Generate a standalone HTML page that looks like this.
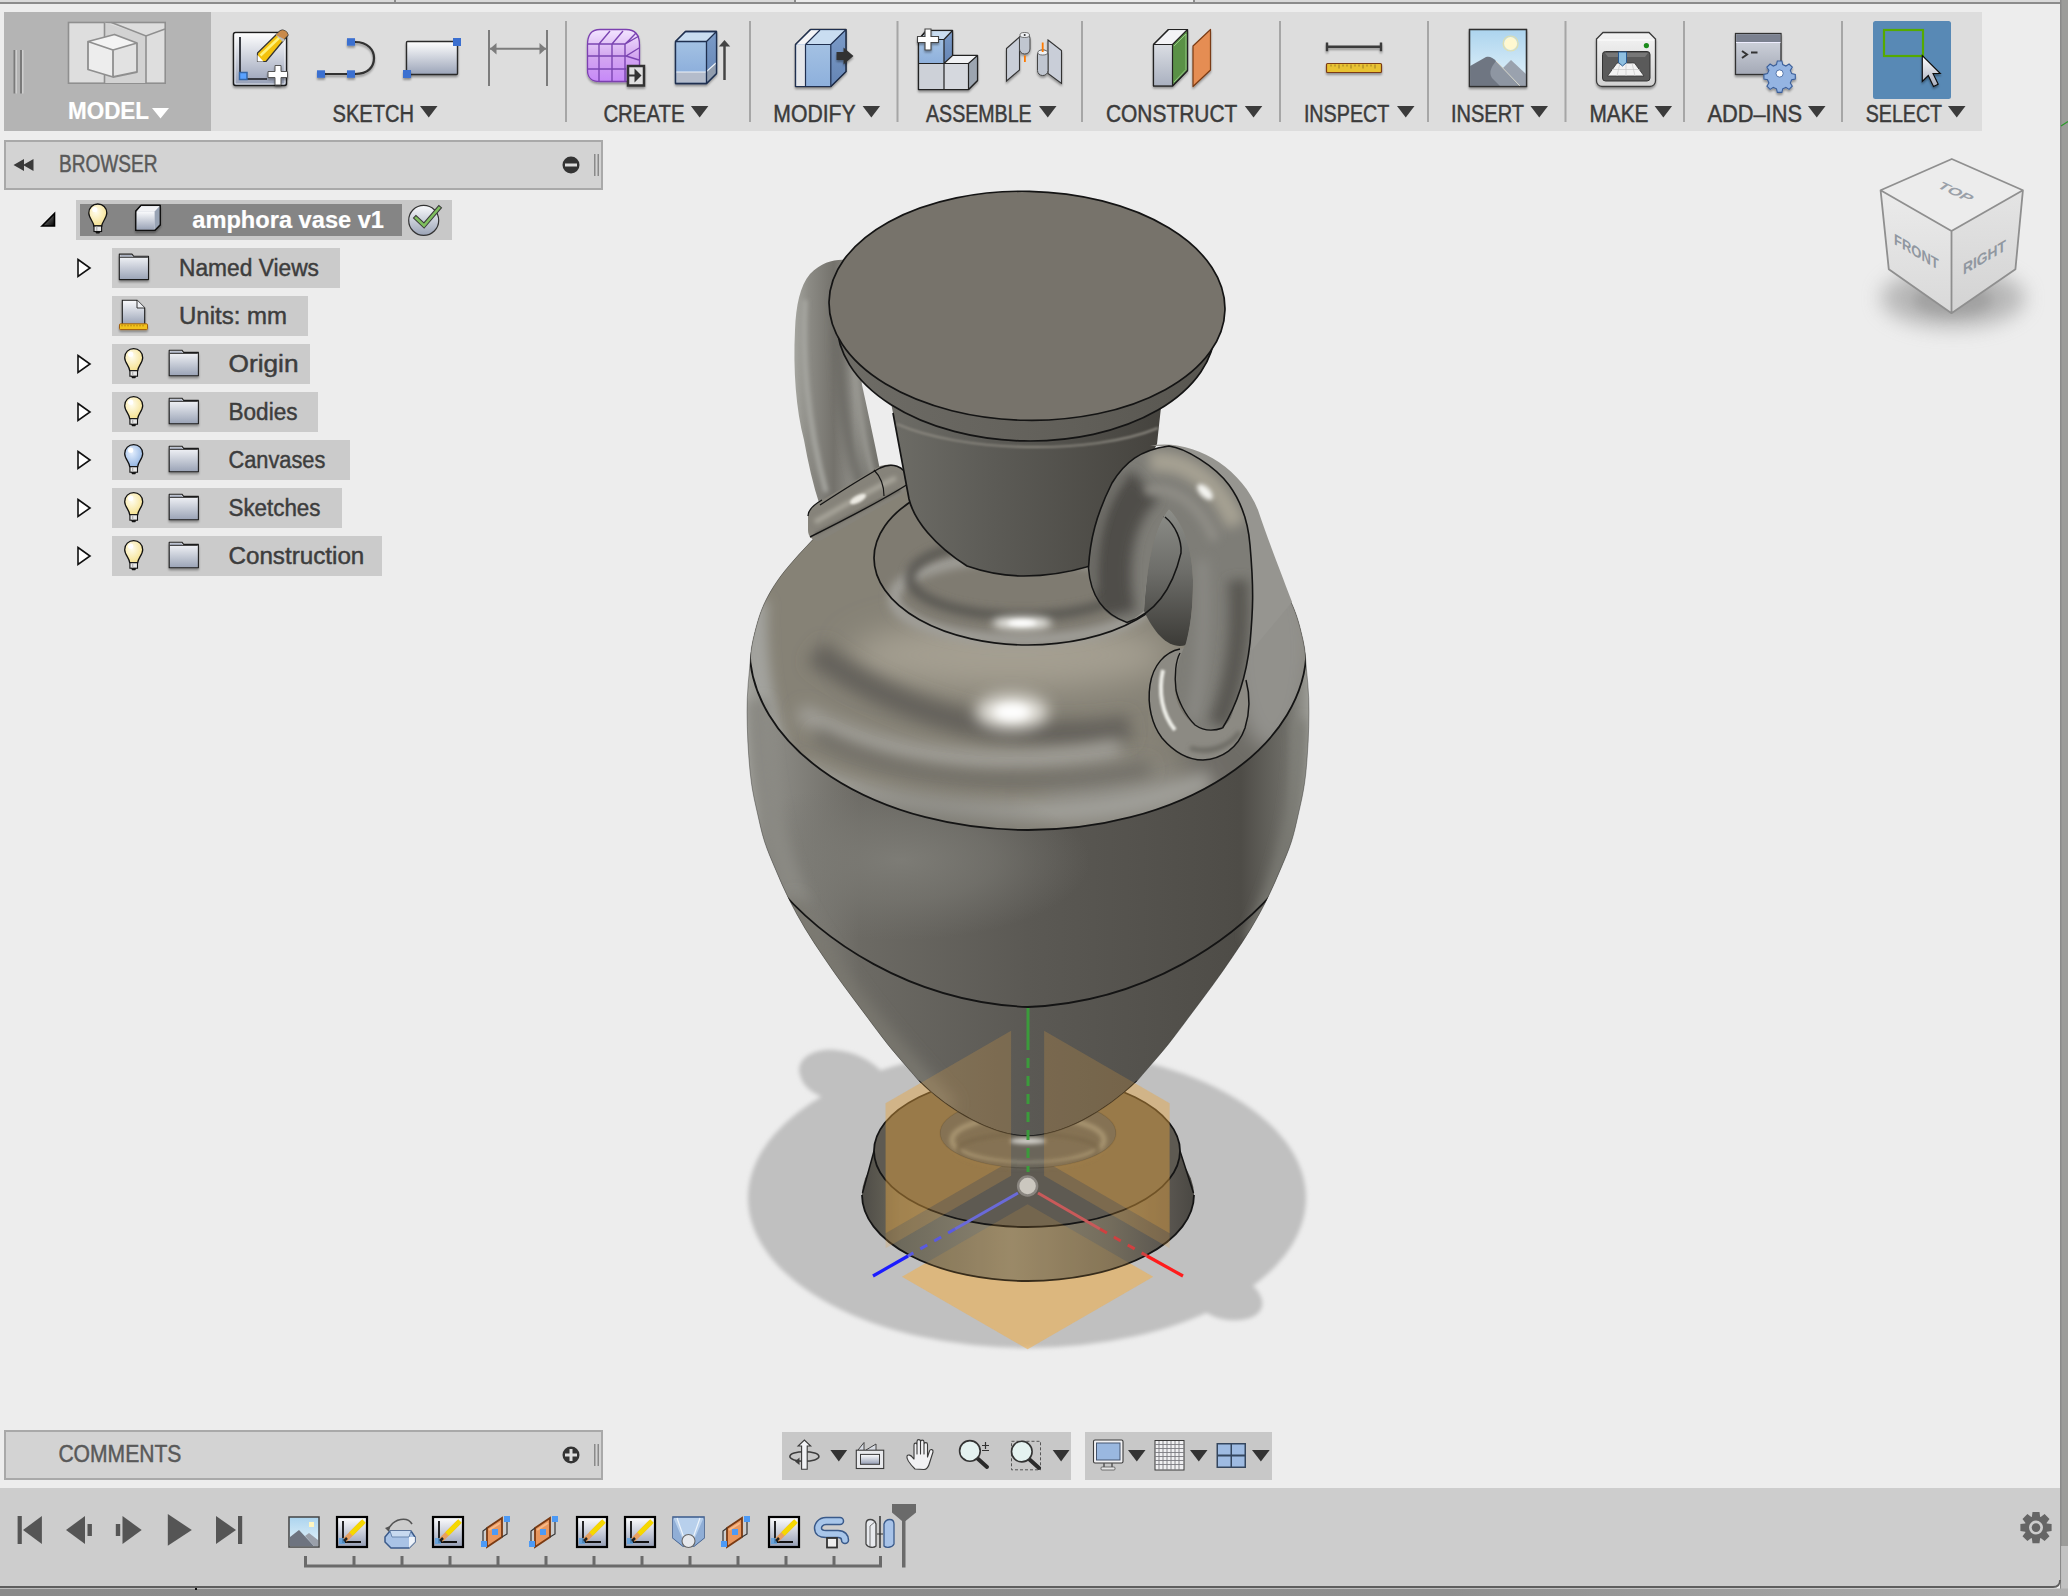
<!DOCTYPE html><html><head><meta charset="utf-8"><style>
html,body{margin:0;padding:0}
body{width:2068px;height:1596px;overflow:hidden;background:#ededed;position:relative}
svg{position:absolute;left:0;top:0;font-family:"Liberation Sans",sans-serif}
</style></head><body>
<svg width="2068" height="1596" viewBox="0 0 2068 1596">

<defs>
<linearGradient id="gSk" x1="0" y1="0" x2="0" y2="1"><stop offset="0" stop-color="#ffffff"/><stop offset="1" stop-color="#959eb5"/></linearGradient>
<linearGradient id="gRect" x1="0" y1="0" x2="0" y2="1"><stop offset="0" stop-color="#ffffff"/><stop offset="1" stop-color="#9ba4b8"/></linearGradient>
<linearGradient id="gPurp" x1="0" y1="0" x2="0" y2="1"><stop offset="0" stop-color="#f3e6ff"/><stop offset="0.5" stop-color="#d4a8f0"/><stop offset="1" stop-color="#c688f8"/></linearGradient>
<linearGradient id="gBlueF" x1="0" y1="0" x2="0" y2="1"><stop offset="0" stop-color="#a3c1e3"/><stop offset="1" stop-color="#8eb0dc"/></linearGradient>
<linearGradient id="gBlueR" x1="0" y1="0" x2="0" y2="1"><stop offset="0" stop-color="#7b9bc8"/><stop offset="1" stop-color="#6585b5"/></linearGradient>
<linearGradient id="gGrayF" x1="0" y1="0" x2="0" y2="1"><stop offset="0" stop-color="#dadde3"/><stop offset="1" stop-color="#aab1c0"/></linearGradient>
<linearGradient id="gSky" x1="0" y1="0" x2="0" y2="1"><stop offset="0" stop-color="#acd4ee"/><stop offset="1" stop-color="#e6f4fb"/></linearGradient>
<linearGradient id="gPrinter" x1="0" y1="0" x2="0" y2="1"><stop offset="0" stop-color="#f4f4f4"/><stop offset="1" stop-color="#d2d2d2"/></linearGradient>
<linearGradient id="gWin" x1="0" y1="0" x2="0" y2="1"><stop offset="0" stop-color="#d6dae2"/><stop offset="1" stop-color="#a4a9b6"/></linearGradient>
<linearGradient id="gCur" x1="0" y1="0" x2="0" y2="1"><stop offset="0" stop-color="#ffffff"/><stop offset="1" stop-color="#a8adbd"/></linearGradient>
<linearGradient id="gFold" x1="0" y1="0" x2="0" y2="1"><stop offset="0" stop-color="#fafbfd"/><stop offset="1" stop-color="#9aa3b6"/></linearGradient>
<radialGradient id="gBulb" cx="0.4" cy="0.35" r="0.7"><stop offset="0" stop-color="#fffdf0"/><stop offset="1" stop-color="#f5e08a"/></radialGradient>
<radialGradient id="gBulbB" cx="0.4" cy="0.35" r="0.7"><stop offset="0" stop-color="#e6f0ff"/><stop offset="1" stop-color="#8fb2e0"/></radialGradient>
<filter id="dsh" filterUnits="userSpaceOnUse" x="0" y="0" width="2068" height="1596"><feGaussianBlur in="SourceAlpha" stdDeviation="1.2"/><feOffset dy="1.5"/><feComponentTransfer><feFuncA type="linear" slope="0.35"/></feComponentTransfer><feMerge><feMergeNode/><feMergeNode in="SourceGraphic"/></feMerge></filter>
</defs>


<defs>
<filter id="blur1" filterUnits="userSpaceOnUse" x="0" y="0" width="2068" height="1596"><feGaussianBlur stdDeviation="1.2"/></filter>
<filter id="blur2" filterUnits="userSpaceOnUse" x="0" y="0" width="2068" height="1596"><feGaussianBlur stdDeviation="2"/></filter>
<filter id="blur4" filterUnits="userSpaceOnUse" x="0" y="0" width="2068" height="1596"><feGaussianBlur stdDeviation="4"/></filter>
<filter id="blur6" filterUnits="userSpaceOnUse" x="0" y="0" width="2068" height="1596"><feGaussianBlur stdDeviation="6"/></filter>
<filter id="blur8" filterUnits="userSpaceOnUse" x="0" y="0" width="2068" height="1596"><feGaussianBlur stdDeviation="8"/></filter>
<filter id="blur10" filterUnits="userSpaceOnUse" x="0" y="0" width="2068" height="1596"><feGaussianBlur stdDeviation="10"/></filter>
<filter id="blur16" filterUnits="userSpaceOnUse" x="0" y="0" width="2068" height="1596"><feGaussianBlur stdDeviation="16"/></filter>
<radialGradient id="gMidL"><stop offset="0" stop-color="#7e7d77" stop-opacity="0.95"/><stop offset="0.5" stop-color="#7a7973" stop-opacity="0.6"/><stop offset="1" stop-color="#767570" stop-opacity="0"/></radialGradient>
<mask id="mOutBody" maskUnits="userSpaceOnUse" x="0" y="0" width="2068" height="1596"><rect x="0" y="0" width="2068" height="1596" fill="#fff"/><path d="M918.9,1081 C917.7,1079.6 917.0,1078.7 911.7,1072.5 C906.4,1066.3 894.9,1053.3 887.2,1043.7 C879.5,1034.1 872.7,1024.5 865.5,1014.9 C858.3,1005.3 850.9,995.6 843.9,986 C836.9,976.4 830.2,966.8 823.7,957.2 C817.2,947.6 810.8,938.0 805,928.4 C799.2,918.8 793.9,909.1 789.1,899.5 C784.3,889.9 780.2,880.3 776.1,870.7 C772.0,861.1 767.7,851.4 764.6,841.8 C761.5,832.2 759.6,822.6 757.4,813 C755.2,803.4 753.0,793.8 751.6,784.2 C750.2,774.6 749.4,764.9 748.7,755.3 C748.0,745.7 747.5,736.1 747.3,726.5 C747.1,716.9 746.9,707.3 747.3,697.7 C747.7,688.1 748.6,678.4 749.6,668.8 C750.6,659.2 750.3,651.5 753,640 C755.7,628.5 759.2,613.3 766,600 C772.8,586.7 780.0,575.8 794,560 C808.0,544.2 832.3,518.7 850,505 C867.7,491.3 891.7,482.5 900,478 L1160,470 C1166.7,474.2 1183.7,481.7 1200,495 C1216.3,508.3 1243.0,532.5 1258,550 C1273.0,567.5 1282.5,585.0 1290,600 C1297.5,615.0 1300.3,628.5 1303,640 C1305.7,651.5 1305.5,659.2 1306.4,668.8 C1307.4,678.4 1308.3,688.1 1308.7,697.7 C1309.1,707.3 1308.9,716.9 1308.7,726.5 C1308.5,736.1 1308.0,745.7 1307.3,755.3 C1306.6,764.9 1305.9,774.6 1304.4,784.2 C1303.0,793.8 1300.8,803.4 1298.6,813 C1296.4,822.6 1294.5,832.2 1291.4,841.8 C1288.3,851.4 1284.0,861.1 1279.9,870.7 C1275.8,880.3 1271.7,889.9 1266.9,899.5 C1262.1,909.1 1256.8,918.8 1251,928.4 C1245.2,938.0 1238.8,947.6 1232.3,957.2 C1225.8,966.8 1219.1,976.4 1212.1,986 C1205.1,995.6 1197.7,1005.3 1190.5,1014.9 C1183.3,1024.5 1176.5,1034.1 1168.8,1043.7 C1161.1,1053.3 1149.6,1066.3 1144.3,1072.5 C1139.0,1078.7 1138.3,1079.6 1137.1,1081 C1105,1112 1062,1136 1027,1136 C994,1136 950,1112 918.9,1081 Z" fill="#000"/><ellipse cx="1028" cy="1133" rx="88" ry="35" fill="#000"/></mask>
<linearGradient id="gHole" x1="0" y1="509" x2="0" y2="645" gradientUnits="userSpaceOnUse"><stop offset="0" stop-color="#8c8d88"/><stop offset="0.45" stop-color="#6e6e6a"/><stop offset="1" stop-color="#3c3b37"/></linearGradient>
<clipPath id="cBody"><path d="M918.9,1081 C917.7,1079.6 917.0,1078.7 911.7,1072.5 C906.4,1066.3 894.9,1053.3 887.2,1043.7 C879.5,1034.1 872.7,1024.5 865.5,1014.9 C858.3,1005.3 850.9,995.6 843.9,986 C836.9,976.4 830.2,966.8 823.7,957.2 C817.2,947.6 810.8,938.0 805,928.4 C799.2,918.8 793.9,909.1 789.1,899.5 C784.3,889.9 780.2,880.3 776.1,870.7 C772.0,861.1 767.7,851.4 764.6,841.8 C761.5,832.2 759.6,822.6 757.4,813 C755.2,803.4 753.0,793.8 751.6,784.2 C750.2,774.6 749.4,764.9 748.7,755.3 C748.0,745.7 747.5,736.1 747.3,726.5 C747.1,716.9 746.9,707.3 747.3,697.7 C747.7,688.1 748.6,678.4 749.6,668.8 C750.6,659.2 750.3,651.5 753,640 C755.7,628.5 759.2,613.3 766,600 C772.8,586.7 780.0,575.8 794,560 C808.0,544.2 832.3,518.7 850,505 C867.7,491.3 891.7,482.5 900,478 L1160,470 C1166.7,474.2 1183.7,481.7 1200,495 C1216.3,508.3 1243.0,532.5 1258,550 C1273.0,567.5 1282.5,585.0 1290,600 C1297.5,615.0 1300.3,628.5 1303,640 C1305.7,651.5 1305.5,659.2 1306.4,668.8 C1307.4,678.4 1308.3,688.1 1308.7,697.7 C1309.1,707.3 1308.9,716.9 1308.7,726.5 C1308.5,736.1 1308.0,745.7 1307.3,755.3 C1306.6,764.9 1305.9,774.6 1304.4,784.2 C1303.0,793.8 1300.8,803.4 1298.6,813 C1296.4,822.6 1294.5,832.2 1291.4,841.8 C1288.3,851.4 1284.0,861.1 1279.9,870.7 C1275.8,880.3 1271.7,889.9 1266.9,899.5 C1262.1,909.1 1256.8,918.8 1251,928.4 C1245.2,938.0 1238.8,947.6 1232.3,957.2 C1225.8,966.8 1219.1,976.4 1212.1,986 C1205.1,995.6 1197.7,1005.3 1190.5,1014.9 C1183.3,1024.5 1176.5,1034.1 1168.8,1043.7 C1161.1,1053.3 1149.6,1066.3 1144.3,1072.5 C1139.0,1078.7 1138.3,1079.6 1137.1,1081 C1105,1112 1062,1136 1027,1136 C994,1136 950,1112 918.9,1081 Z"/></clipPath>
<clipPath id="cUpper"><path d="M700,648 L749.5,648 A278.5,182 0 0 0 1306.5,648 L1360,648 L1360,400 L700,400 Z"/></clipPath>
<clipPath id="cMid"><path d="M700,860 L772,880 C820,940 910,1002 1028,1007 C1146,1002 1236,940 1284,880 L1360,860 L1360,600 L700,600 Z"/></clipPath>
<linearGradient id="gBodyH" x1="747" y1="0" x2="1308" y2="0" gradientUnits="userSpaceOnUse">
  <stop offset="0" stop-color="#a3a39d"/>
  <stop offset="0.04" stop-color="#8d8c86"/>
  <stop offset="0.2" stop-color="#6c6a64"/>
  <stop offset="0.5" stop-color="#5b5954"/>
  <stop offset="0.88" stop-color="#4e4c47"/>
  <stop offset="0.96" stop-color="#6e6d67"/>
  <stop offset="1" stop-color="#9a9a94"/>
</linearGradient>
<linearGradient id="gNeck" x1="893" y1="0" x2="1161" y2="0" gradientUnits="userSpaceOnUse">
  <stop offset="0" stop-color="#6d6c66"/>
  <stop offset="0.35" stop-color="#5d5c57"/>
  <stop offset="1" stop-color="#45433e"/>
</linearGradient>
<linearGradient id="gRim" x1="832" y1="0" x2="1224" y2="0" gradientUnits="userSpaceOnUse">
  <stop offset="0" stop-color="#6e6c66"/>
  <stop offset="0.5" stop-color="#64625c"/>
  <stop offset="1" stop-color="#57554f"/>
</linearGradient>
<linearGradient id="gFoot" x1="862" y1="0" x2="1194" y2="0" gradientUnits="userSpaceOnUse">
  <stop offset="0" stop-color="#4e4c47"/>
  <stop offset="0.12" stop-color="#6e6a5c"/>
  <stop offset="0.45" stop-color="#8c8470"/>
  <stop offset="0.75" stop-color="#736c5c"/>
  <stop offset="0.92" stop-color="#5a5650"/>
  <stop offset="1" stop-color="#4a4843"/>
</linearGradient>
<linearGradient id="gLH" x1="796" y1="0" x2="880" y2="0" gradientUnits="userSpaceOnUse">
  <stop offset="0" stop-color="#a2a29c"/>
  <stop offset="0.15" stop-color="#8c8b85"/>
  <stop offset="0.45" stop-color="#74726c"/>
  <stop offset="0.7" stop-color="#92918b"/>
  <stop offset="1" stop-color="#6f6e68"/>
</linearGradient>
</defs>
<rect x="0" y="0" width="2068" height="1596" fill="#ededed" />
<rect x="0" y="0" width="2068" height="2" fill="#dadada" />
<rect x="794" y="0" width="400" height="2" fill="#ececec" />
<rect x="394" y="0" width="2" height="3" fill="#8c8c8c" />
<rect x="794" y="0" width="2" height="3" fill="#8c8c8c" />
<rect x="1193" y="0" width="2" height="3" fill="#8c8c8c" />
<rect x="0" y="2" width="2068" height="2" fill="#8c8c8c" />

<g id="vase">
<!-- shadow -->
<g filter="url(#blur2)" fill="#c0c0c0">
<ellipse cx="1027" cy="1198" rx="279" ry="150"/>
<path d="M800,1075 C795,1058 815,1048 835,1050 C855,1052 870,1060 880,1070 L880,1100 L830,1100 C815,1095 803,1088 800,1075 Z"/>
<path d="M1262,1300 C1265,1315 1248,1322 1228,1320 C1208,1318 1195,1305 1185,1295 L1190,1270 L1235,1275 C1250,1280 1259,1290 1262,1300 Z"/>
</g>
<!-- bottom construction diamond -->
<path d="M1027.6,1204.3 L902.0,1276.8 L1027.6,1349.3 L1153.2,1276.8 Z" fill="#f2b456" fill-opacity="0.5"/>
<!-- foot -->
<ellipse cx="1028" cy="1195" rx="166" ry="86" fill="url(#gFoot)"/>
<path d="M862,1195 L874,1151 L1180,1151 L1194,1195 Z" fill="url(#gFoot)"/>
<ellipse cx="1027" cy="1151" rx="153" ry="76" fill="#5e5a52"/>
<path d="M862,1195 A166,86 0 0 0 1194,1195" fill="none" stroke="#151515" stroke-width="1.8"/>
<path d="M862.5,1193 L874,1151 M1193.5,1193 L1180,1151" fill="none" stroke="#151515" stroke-width="1.5"/>
<ellipse cx="1027" cy="1151" rx="153" ry="76" fill="none" stroke="#151515" stroke-width="1.8"/>
<!-- foot junction torus -->
<ellipse cx="1028" cy="1133" rx="88" ry="35" fill="#6a655a"/>
<ellipse cx="1028" cy="1140" rx="76" ry="24" fill="none" stroke="#9a9482" stroke-width="5" filter="url(#blur2)"/>
<ellipse cx="1028" cy="1150" rx="70" ry="16" fill="none" stroke="#5d594f" stroke-width="4" filter="url(#blur2)"/>
<ellipse cx="1028" cy="1141" rx="18" ry="3" fill="#d8d6d0" filter="url(#blur2)"/>
<ellipse cx="1028" cy="1133" rx="88" ry="35" fill="none" stroke="#4a463e" stroke-width="1.2" opacity="0.6"/>
<!-- body -->
<g clip-path="url(#cBody)">
  <rect x="740" y="460" width="580" height="700" fill="url(#gBodyH)"/>
  <g clip-path="url(#cUpper)">
    <rect x="740" y="460" width="580" height="400" fill="#868276"/>
    <g filter="url(#blur16)">
      <ellipse cx="1010" cy="655" rx="160" ry="35" fill="#a49f91"/>
      <ellipse cx="1250" cy="730" rx="70" ry="90" fill="#6e6c66"/>
      <ellipse cx="1120" cy="800" rx="80" ry="30" fill="#8c8a83"/>
    </g>
    <path d="M755,600 C752,660 760,720 790,790" fill="none" stroke="#a3a39e" stroke-width="26" filter="url(#blur6)"/>
    <path d="M815,652 C850,680 905,710 990,728 C1040,735 1090,735 1130,728" fill="none" stroke="#65625b" stroke-width="26" filter="url(#blur8)"/>
    <path d="M800,712 C850,740 910,756 980,760 C1030,762 1080,756 1120,748" fill="none" stroke="#a4a39d" stroke-width="16" filter="url(#blur8)"/>
    <path d="M815,735 C870,765 930,778 1000,780 C1060,781 1110,776 1150,768" fill="none" stroke="#6e6c65" stroke-width="14" filter="url(#blur8)"/>
    <ellipse cx="1272" cy="650" rx="40" ry="100" fill="#92918c" filter="url(#blur10)"/>
    <path d="M800,770 C860,800 940,812 1030,812 C1100,812 1160,800 1210,780" fill="none" stroke="#a3a29c" stroke-width="18" filter="url(#blur8)"/>
    <ellipse cx="1012" cy="712" rx="36" ry="17" fill="#e8e6e0" filter="url(#blur8)"/>
    <ellipse cx="1012" cy="712" rx="17" ry="8" fill="#ffffff" filter="url(#blur4)"/>
  </g>
  <g clip-path="url(#cMid)">
    <ellipse cx="900" cy="860" rx="190" ry="80" fill="url(#gMidL)"/>
    <path d="M758,700 C760,780 775,850 800,905" fill="none" stroke="#8a8983" stroke-width="22" filter="url(#blur6)"/>
  </g>
  <path d="M790,900 C830,975 880,1035 950,1110" fill="none" stroke="#7a7870" stroke-width="18" filter="url(#blur8)"/>
  <path d="M1300,720 C1300,800 1285,870 1250,940" fill="none" stroke="#7c7b75" stroke-width="12" filter="url(#blur6)"/>
</g>
<g clip-path="url(#cBody)"><path d="M749.5,648 A278.5,182 0 0 0 1306.5,648" fill="none" stroke="#141414" stroke-width="1.8"/>
<path d="M918.9,1081 C950,1112 994,1136 1027,1136 C1062,1136 1105,1112 1137.1,1081" fill="none" stroke="#141414" stroke-width="1.6"/>
<path d="M772,880 C820,940 910,1002 1028,1007 C1146,1002 1236,940 1284,880" fill="none" stroke="#141414" stroke-width="1.8"/></g>
<path d="M918.9,1081 C917.7,1079.6 917.0,1078.7 911.7,1072.5 C906.4,1066.3 894.9,1053.3 887.2,1043.7 C879.5,1034.1 872.7,1024.5 865.5,1014.9 C858.3,1005.3 850.9,995.6 843.9,986 C836.9,976.4 830.2,966.8 823.7,957.2 C817.2,947.6 810.8,938.0 805,928.4 C799.2,918.8 793.9,909.1 789.1,899.5 C784.3,889.9 780.2,880.3 776.1,870.7 C772.0,861.1 767.7,851.4 764.6,841.8 C761.5,832.2 759.6,822.6 757.4,813 C755.2,803.4 753.0,793.8 751.6,784.2 C750.2,774.6 749.4,764.9 748.7,755.3 C748.0,745.7 747.5,736.1 747.3,726.5 C747.1,716.9 746.9,707.3 747.3,697.7 C747.7,688.1 748.6,678.4 749.6,668.8 C750.6,659.2 750.3,651.5 753,640 C755.7,628.5 759.2,613.3 766,600 C772.8,586.7 780.0,575.8 794,560 C808.0,544.2 832.3,518.7 850,505 C867.7,491.3 891.7,482.5 900,478 L1160,470 C1166.7,474.2 1183.7,481.7 1200,495 C1216.3,508.3 1243.0,532.5 1258,550 C1273.0,567.5 1282.5,585.0 1290,600 C1297.5,615.0 1300.3,628.5 1303,640 C1305.7,651.5 1305.5,659.2 1306.4,668.8 C1307.4,678.4 1308.3,688.1 1308.7,697.7 C1309.1,707.3 1308.9,716.9 1308.7,726.5 C1308.5,736.1 1308.0,745.7 1307.3,755.3 C1306.6,764.9 1305.9,774.6 1304.4,784.2 C1303.0,793.8 1300.8,803.4 1298.6,813 C1296.4,822.6 1294.5,832.2 1291.4,841.8 C1288.3,851.4 1284.0,861.1 1279.9,870.7 C1275.8,880.3 1271.7,889.9 1266.9,899.5 C1262.1,909.1 1256.8,918.8 1251,928.4 C1245.2,938.0 1238.8,947.6 1232.3,957.2 C1225.8,966.8 1219.1,976.4 1212.1,986 C1205.1,995.6 1197.7,1005.3 1190.5,1014.9 C1183.3,1024.5 1176.5,1034.1 1168.8,1043.7 C1161.1,1053.3 1149.6,1066.3 1144.3,1072.5 C1139.0,1078.7 1138.3,1079.6 1137.1,1081 C1105,1112 1062,1136 1027,1136 C994,1136 950,1112 918.9,1081 Z" fill="none" stroke="#2a2a28" stroke-width="0.8" opacity="0.5"/>
<!-- left handle -->
<path d="M846,260 C835,259 822,262 810,274 C800,286 796,305 795,330 C793,370 796,410 804,440 C808,462 813,485 820,506 L880,470 C874,440 868,412 862,385 L852,300 Z" fill="url(#gLH)"/>
<path d="M805,300 C802,350 806,420 826,492" fill="none" stroke="#a6a6a0" stroke-width="5" filter="url(#blur2)"/>
<path d="M838,290 C836,360 843,430 860,485" fill="none" stroke="#6a6964" stroke-width="9" filter="url(#blur4)"/>
<path d="M852,330 C855,390 862,440 874,478" fill="none" stroke="#9a9993" stroke-width="4" filter="url(#blur2)"/>
<!-- handle collar ring -->
<path d="M808,516 C808,510 815,504 822,500 L880,466 C892,462 904,466 908,478 C910,486 906,492 900,496 L822,540 C815,543 808,538 808,530 Z" fill="#86837a"/>
<path d="M815,522 C840,508 870,490 896,478" fill="none" stroke="#a9a69b" stroke-width="5" filter="url(#blur2)"/>
<path d="M815,534 C840,522 870,505 900,490" fill="none" stroke="#6a6760" stroke-width="3" filter="url(#blur1)"/>
<ellipse cx="858" cy="499" rx="9" ry="3.5" fill="#eceae3" filter="url(#blur1)" transform="rotate(-28 858 499)"/>
<path d="M820,505 C840,492 862,478 880,468 C892,462 904,466 908,478 M810,537 C840,522 880,502 908,484 M808,516 C808,510 815,504 822,500" fill="none" stroke="#141414" stroke-width="1.4"/>
<path d="M874,470 C880,476 884,484 884,496" fill="none" stroke="#141414" stroke-width="1.2"/>
<!-- shoulder collar -->
<ellipse cx="1028" cy="558" rx="154" ry="87" fill="#7f7b71"/>
<g>
  <ellipse cx="1022" cy="598" rx="128" ry="42" fill="none" stroke="#a09f99" stroke-width="12" filter="url(#blur4)"/>
  <ellipse cx="1022" cy="578" rx="112" ry="38" fill="none" stroke="#5a5852" stroke-width="10" filter="url(#blur4)"/>
  <ellipse cx="1022" cy="623" rx="30" ry="6" fill="#f4f4f0" filter="url(#blur4)"/>
  <ellipse cx="1022" cy="623" rx="14" ry="3" fill="#ffffff" filter="url(#blur2)"/>
</g>
<ellipse cx="1028" cy="558" rx="154" ry="87" fill="none" stroke="#141414" stroke-width="1.7"/>
<!-- neck -->
<path d="M890,398 L893,413 L909,499 C914,520 934,545 967,566 C990,574 1010,576 1024,576 C1050,576 1070,572 1100,562 L1157,444 L1162,398 Z" fill="url(#gNeck)"/>
<path d="M893,413 L909,499 C914,520 934,545 967,566 C990,574 1010,576 1024,576 C1050,576 1070,572 1090,566" fill="none" stroke="#141414" stroke-width="1.7"/>
<!-- right handle -->
<g id="rhandle">
  <defs><clipPath id="cRH"><path d="M1088.5,568 C1090,540 1096,515 1112,483 C1125,462 1140,450 1169,446 C1185,448 1215,466 1229,485 C1240,500 1248,520 1250,545 C1254,590 1253,610 1250,643 C1247,670 1240,700 1222.6,728 C1214,731 1205,732 1195,725 C1185,715 1178,700 1176,690 C1174,675 1178,660 1186,643 C1192,620 1193,600 1193,580 C1192,550 1185,525 1169,509 C1155,525 1147,560 1144,611 C1135,618 1130,622 1127,622.5 C1105,618 1092,600 1088.5,568 Z"/></clipPath></defs>
  <!-- hole -->
  <path d="M1150,446 C1190,438 1240,465 1258,510 C1268,540 1278,565 1292,602 L1252,650 L1250,545 C1248,520 1240,500 1229,485 C1215,466 1185,448 1169,446 Z" fill="#969590"/>
  <path d="M1144,611 C1147,560 1155,525 1169,509 C1185,525 1192,550 1193,580 C1193,610 1190,630 1186,645 C1170,650 1155,635 1144,611 Z" fill="url(#gHole)"/>
  <!-- lower ring (full torus, behind leg) -->
  <path d="M1180,649 C1165,652 1153,665 1150,685 C1147,705 1152,725 1162,738 C1174,752 1188,760 1203,760 C1222,759 1238,748 1245,728 C1250,712 1250,695 1246,680 C1240,662 1226,650 1206,646 C1196,645 1188,646 1180,649 Z M1182,662 C1174,672 1172,688 1178,704 C1185,720 1198,730 1212,730 C1226,730 1234,718 1234,702 C1234,685 1226,670 1212,662 C1202,657 1190,657 1182,662 Z" fill="#8c8a83" fill-rule="evenodd"/>
  <path d="M1163,670 C1158,692 1162,714 1175,730" fill="none" stroke="#ececE6" stroke-width="4" filter="url(#blur1)"/>
  <path d="M1190,748 C1208,754 1228,748 1240,732" fill="none" stroke="#6c6a63" stroke-width="5" filter="url(#blur2)"/>
  <path d="M1180,649 C1165,652 1153,665 1150,685 C1147,705 1152,725 1162,738 C1174,752 1188,760 1203,760 C1222,759 1238,748 1245,728 C1250,712 1250,695 1246,680" fill="none" stroke="#141414" stroke-width="1.5"/>
  <g clip-path="url(#cRH)">
    <rect x="1080" y="440" width="180" height="300" fill="#7e7d77"/>
    <path d="M1116,615 C1105,565 1112,515 1145,485" fill="none" stroke="#4f4e4a" stroke-width="40" filter="url(#blur6)"/>
    <path d="M1094,590 C1092,545 1100,505 1122,475" fill="none" stroke="#6e6d68" stroke-width="8" filter="url(#blur4)"/>
    <path d="M1150,462 C1185,458 1218,482 1236,525" fill="none" stroke="#a6a193" stroke-width="20" filter="url(#blur6)"/>
    <path d="M1145,490 C1175,485 1200,505 1215,540" fill="none" stroke="#8f8d86" stroke-width="10" filter="url(#blur4)"/>
    <path d="M1238,580 C1242,630 1236,680 1218,725" fill="none" stroke="#5a5853" stroke-width="20" filter="url(#blur6)"/>
    <path d="M1202,560 C1206,620 1202,680 1192,720" fill="none" stroke="#8a8984" stroke-width="12" filter="url(#blur6)"/>
    <ellipse cx="1205" cy="492" rx="10" ry="5" fill="#f4f4f0" filter="url(#blur2)" transform="rotate(45 1205 492)"/>
  </g>
  <!-- outlines -->
  <path d="M1088.5,568 C1090,540 1096,515 1112,483 C1125,462 1140,450 1169,446 C1185,448 1215,466 1229,485 C1240,500 1248,520 1250,545 C1254,590 1253,610 1250,643 C1247,670 1240,700 1222.6,728" fill="none" stroke="#141414" stroke-width="1.6"/>
  <path d="M1088.5,568 C1090,590 1098,612 1127,622.5 C1150,615 1171,595 1181,553 C1182,540 1175,525 1165,517" fill="none" stroke="#141414" stroke-width="1.5"/>
  <path d="M1180,653 C1176,660 1174,675 1176,690 C1178,700 1185,715 1195,725 C1205,732 1214,731 1222.6,728" fill="none" stroke="#141414" stroke-width="1.4"/>
</g>
<!-- rim & lip -->
<g transform="rotate(1.2 1027 326)"><ellipse cx="1026" cy="326" rx="189" ry="115" fill="url(#gRim)"/>
<ellipse cx="1026" cy="326" rx="189" ry="115" fill="none" stroke="#141414" stroke-width="1.7"/></g>
<path d="M897,424 C960,452 1090,456 1158,428" fill="none" stroke="#8a877f" stroke-width="2" filter="url(#blur1)"/>
<ellipse cx="1027" cy="305.8" rx="198" ry="114.5" fill="#77736b" stroke="#141414" stroke-width="1.7" transform="rotate(1.2 1027 305.8)"/>
<!-- construction planes -->
<path d="M1011.1,1175.8 L885.6,1248.3 L885.6,1103.3 L1011.1,1030.8 Z" fill="#e8a442" fill-opacity="0.22"/>
<path d="M1044.1,1175.8 L1169.6,1248.3 L1169.6,1103.3 L1044.1,1030.8 Z" fill="#e8a442" fill-opacity="0.22"/>
<g mask="url(#mOutBody)">
<path d="M1011.1,1160.8 L885.6,1233.3 L885.6,1103.3 L1011.1,1030.8 Z" fill="#e8a640" fill-opacity="0.27"/>
<path d="M1044.1,1160.8 L1169.6,1233.3 L1169.6,1103.3 L1044.1,1030.8 Z" fill="#e8a640" fill-opacity="0.27"/>
</g>
<path d="M1027.6,1204.3 L902.0,1276.8 L1027.6,1349.3 L1153.2,1276.8 Z" fill="#eea640" fill-opacity="0.16"/>
<!-- axes -->
<line x1="1028" y1="1008" x2="1028" y2="1040" stroke="#3b9b3b" stroke-width="3"/>
<line x1="1028" y1="1040" x2="1028" y2="1172" stroke="#3b9b3b" stroke-width="3" stroke-dasharray="10,8"/>
<line x1="1018" y1="1193" x2="955" y2="1229" stroke="#6a6ad8" stroke-width="3"/>
<line x1="955" y1="1229" x2="908" y2="1256" stroke="#5a5ae0" stroke-width="3" stroke-dasharray="8,8"/>
<line x1="908" y1="1256" x2="873" y2="1276" stroke="#1c1cff" stroke-width="3.2"/>
<line x1="1038" y1="1193" x2="1100" y2="1229" stroke="#c85a5a" stroke-width="3"/>
<line x1="1100" y1="1229" x2="1147" y2="1256" stroke="#d04040" stroke-width="3" stroke-dasharray="8,8"/>
<line x1="1147" y1="1256" x2="1183" y2="1276" stroke="#ff1c1c" stroke-width="3.2"/>
<circle cx="1027.6" cy="1186" r="9.5" fill="#cbc7bf" stroke="#8a8680" stroke-width="2.5"/>
</g>

<rect x="4" y="12" width="1978" height="119" fill="#dddddd" />
<rect x="4" y="12" width="207" height="119" fill="#b4b4b4" />
<rect x="565" y="21" width="2" height="101" fill="#a6a6a6" />
<rect x="749" y="21" width="2" height="101" fill="#a6a6a6" />
<rect x="896.5" y="21" width="2" height="101" fill="#a6a6a6" />
<rect x="1081" y="21" width="2" height="101" fill="#a6a6a6" />
<rect x="1279" y="21" width="2" height="101" fill="#a6a6a6" />
<rect x="1427" y="21" width="2" height="101" fill="#a6a6a6" />
<rect x="1564.5" y="21" width="2" height="101" fill="#a6a6a6" />
<rect x="1683" y="21" width="2" height="101" fill="#a6a6a6" />
<rect x="1841" y="21" width="2" height="101" fill="#a6a6a6" />
<text x="332.5" y="122" font-size="23" font-weight="400" fill="#3b3b3b" stroke="#3b3b3b" stroke-width="0.45" textLength="81.5" lengthAdjust="spacingAndGlyphs" >SKETCH</text>
<path d="M420,106 L437.5,106 L428.75,117.5 Z" fill="#3b3b3b"/>
<text x="603.4" y="122" font-size="23" font-weight="400" fill="#3b3b3b" stroke="#3b3b3b" stroke-width="0.45" textLength="81.2" lengthAdjust="spacingAndGlyphs" >CREATE</text>
<path d="M690.9,106 L708.4,106 L699.65,117.5 Z" fill="#3b3b3b"/>
<text x="773.3" y="122" font-size="23" font-weight="400" fill="#3b3b3b" stroke="#3b3b3b" stroke-width="0.45" textLength="82.3" lengthAdjust="spacingAndGlyphs" >MODIFY</text>
<path d="M862.6,106 L880.1,106 L871.35,117.5 Z" fill="#3b3b3b"/>
<text x="926" y="122" font-size="23" font-weight="400" fill="#3b3b3b" stroke="#3b3b3b" stroke-width="0.45" textLength="105.6" lengthAdjust="spacingAndGlyphs" >ASSEMBLE</text>
<path d="M1039,106 L1056.5,106 L1047.75,117.5 Z" fill="#3b3b3b"/>
<text x="1106" y="122" font-size="23" font-weight="400" fill="#3b3b3b" stroke="#3b3b3b" stroke-width="0.45" textLength="131.3" lengthAdjust="spacingAndGlyphs" >CONSTRUCT</text>
<path d="M1244.8,106 L1262.3,106 L1253.55,117.5 Z" fill="#3b3b3b"/>
<text x="1303.9" y="122" font-size="23" font-weight="400" fill="#3b3b3b" stroke="#3b3b3b" stroke-width="0.45" textLength="85.5" lengthAdjust="spacingAndGlyphs" >INSPECT</text>
<path d="M1397,106 L1414.5,106 L1405.75,117.5 Z" fill="#3b3b3b"/>
<text x="1451" y="122" font-size="23" font-weight="400" fill="#3b3b3b" stroke="#3b3b3b" stroke-width="0.45" textLength="73" lengthAdjust="spacingAndGlyphs" >INSERT</text>
<path d="M1530.5,106 L1548.0,106 L1539.25,117.5 Z" fill="#3b3b3b"/>
<text x="1589.5" y="122" font-size="23" font-weight="400" fill="#3b3b3b" stroke="#3b3b3b" stroke-width="0.45" textLength="59" lengthAdjust="spacingAndGlyphs" >MAKE</text>
<path d="M1654.6,106 L1672.1,106 L1663.35,117.5 Z" fill="#3b3b3b"/>
<text x="1707.4" y="122" font-size="23" font-weight="400" fill="#3b3b3b" stroke="#3b3b3b" stroke-width="0.45" textLength="94.6" lengthAdjust="spacingAndGlyphs" >ADD–INS</text>
<path d="M1808,106 L1825.5,106 L1816.75,117.5 Z" fill="#3b3b3b"/>
<text x="1865.8" y="122" font-size="23" font-weight="400" fill="#3b3b3b" stroke="#3b3b3b" stroke-width="0.45" textLength="76.2" lengthAdjust="spacingAndGlyphs" >SELECT</text>
<path d="M1948,106 L1965.5,106 L1956.75,117.5 Z" fill="#3b3b3b"/>
<text x="68" y="119" font-size="23" font-weight="700" fill="#ffffff" stroke="#ffffff" stroke-width="0.2" textLength="81" lengthAdjust="spacingAndGlyphs" >MODEL</text>
<path d="M152,108 L169,108 L160.5,118.5 Z" fill="#ffffff"/>

<g id="tb-icons">
<!-- grip -->
<rect x="13.5" y="50" width="2" height="43.5" fill="#7a7a7a"/><rect x="15.5" y="50" width="1.5" height="43.5" fill="#cfcfcf"/>
<rect x="20" y="50" width="2" height="43.5" fill="#7a7a7a"/><rect x="22" y="50" width="1.5" height="43.5" fill="#cfcfcf"/>
<!-- model icon -->
<rect x="68.5" y="22.5" width="96.7" height="60.7" fill="#dedede" stroke="#8f8f8f" stroke-width="1.6"/>
<path d="M104.5,22.5 L146,36 L146,83 L104.5,83 Z" fill="#d2d2d2"/>
<path d="M104.5,22.5 V83 M111.5,22.5 L146,36 L165,29 M146,36 V83" fill="none" stroke="#8f8f8f" stroke-width="1.6"/>
<path d="M88,41.5 L114.5,34.5 L137,43 L113,50 Z" fill="#f3f3f3"/>
<path d="M88,41.5 L113,50 L113,77 L88,69.5 Z" fill="#ededed"/>
<path d="M113,50 L137,43 L137,72 L113,77 Z" fill="#e2e2e2"/>
<path d="M88,41.5 L114.5,34.5 L137,43 L137,72 L113,77 L88,69.5 Z M88,41.5 L113,50 L137,43 M113,50 V77" fill="none" stroke="#8f8f8f" stroke-width="1.8" stroke-linejoin="round"/>
<!-- sketch -->
<g filter="url(#dsh)">
<rect x="233.5" y="32.5" width="53" height="53" rx="2" fill="url(#gSk)" stroke="#1f1f1f" stroke-width="1.5"/>
</g>
<rect x="235" y="34" width="50" height="50" rx="1" fill="none" stroke="#ffffff" stroke-width="1" opacity="0.7"/>
<path d="M240,37 V79 H267" fill="none" stroke="#3a3d45" stroke-width="2"/>
<rect x="239.5" y="72.5" width="7.5" height="7" fill="#5aa2ff" stroke="#3567a8" stroke-width="1.5"/>
<path d="M257.5,61.5 L257.5,53 L280,31 C283,29 287,31 288,35 L266,61.5 Z" fill="#f4c20d" stroke="#333" stroke-width="1.2" stroke-linejoin="round"/>
<path d="M257.5,61.5 L257.5,55 L263.5,61.5 Z" fill="#ffffff"/>
<path d="M260.5,55.5 L280,37" stroke="#fff27a" stroke-width="2.5"/>
<path d="M277,34 L284,41" stroke="#bdbdbd" stroke-width="3"/>
<path d="M280,31 C283,29 287,31 288,35 L284,39 L276,35 Z" fill="#c98a4a"/>
<path d="M275,65.5 H281 V71.5 H287.5 V77.5 H281 V85 H275 V77.5 H268 V71.5 H275 Z" fill="#ffffff" stroke="#555" stroke-width="1" filter="url(#dsh)"/>
<!-- spline -->
<path d="M324,74 H347 M355,42 C368,42 374,50 374,58 C374,67 368,74 355,74" fill="none" stroke="#333" stroke-width="2.2" filter="url(#dsh)"/>
<rect x="317" y="70.3" width="8" height="7.5" fill="#3b6fd0" filter="url(#dsh)"/>
<rect x="347" y="70.3" width="8" height="7.5" fill="#3b6fd0" filter="url(#dsh)"/>
<rect x="347" y="38.2" width="8" height="7.5" fill="#3b6fd0" filter="url(#dsh)"/>
<!-- rectangle -->
<rect x="406.5" y="41.5" width="51" height="33" rx="1" fill="url(#gRect)" stroke="#2b2b2b" stroke-width="1.4" filter="url(#dsh)"/>
<rect x="453" y="38" width="8" height="8" fill="#3b6fd0"/>
<rect x="403" y="70" width="8" height="8" fill="#3b6fd0" filter="url(#dsh)"/>
<!-- dimension -->
<path d="M489,30 V86 M547,30 V86 M489,48.8 H547" fill="none" stroke="#7c7c7c" stroke-width="2"/>
<path d="M490,48.8 L496.5,43 V54.6 Z M546,48.8 L539.5,43 V54.6 Z" fill="#7c7c7c"/>
<!-- form (purple) -->
<path d="M600,29.5 H626 C635,29.5 639.5,35 639.5,45 V70 C639.5,78 635,81.5 626,81.5 H600 C591,81.5 587.5,78 587.5,70 V45 C587.5,35 591,29.5 600,29.5 Z" fill="url(#gPurp)" stroke="#7b3fb0" stroke-width="1.3" filter="url(#dsh)"/>
<path d="M588,44 H625 L639,36 M588,56 H626 L639,48 M588,69 H626 M599,44 V81 M612,44 V81 M625,44 V81 M625,44 C630,40 633,36 636,33 M599,44 L610,31 M612,44 L623,31 M626,56 L639,60" fill="none" stroke="#7b45b2" stroke-width="1.4"/>
<rect x="628" y="66" width="16" height="19.5" fill="#e0e0e0" stroke="#303030" stroke-width="2.5" filter="url(#dsh)"/>
<path d="M634.5,68.5 L641.5,75.5 L634.5,82.5 Z" fill="#333"/><path d="M628,75.5 H635" stroke="#333" stroke-width="2"/>
<!-- extrude -->
<g filter="url(#dsh)">
<path d="M675.5,41.5 L685.5,31.5 H716.5 V73.5 L706.5,83.5 H675.5 Z" fill="#8fb1dc" stroke="#1f2f4f" stroke-width="1.3" stroke-linejoin="round"/>
</g>
<path d="M676.5,41.5 L685.5,32.5 H715.5 L706,41.5 Z" fill="#c9ddf1"/>
<path d="M706.5,41.5 L715.8,32.3 V73.3 L706.5,82.8 Z" fill="url(#gBlueR)"/>
<rect x="676.3" y="42.3" width="29.5" height="29" fill="url(#gBlueF)"/>
<rect x="676.3" y="72" width="29.5" height="10.8" fill="#b4bccb"/>
<path d="M706.5,72 L715.8,63 V73.3 L706.5,82.8 Z" fill="#909cad"/>
<path d="M676,72 H706 L716,63" fill="none" stroke="#eef2f7" stroke-width="1.2"/>
<path d="M675.5,41.5 L685.5,31.5 H716.5 V73.5 L706.5,83.5 H675.5 Z M675.5,41.5 H706.5 L716.5,31.5 M706.5,41.5 V83.5" fill="none" stroke="#1f2f4f" stroke-width="1.3" stroke-linejoin="round"/>
<path d="M724.5,80 V45" stroke="#444" stroke-width="2.5"/><path d="M718.8,46.5 L724.5,40 L730.2,46.5 Z" fill="#444"/>
<!-- modify press-pull -->
<g filter="url(#dsh)">
<path d="M795.5,44.5 L810.5,29.5 H846 V71.5 L830.8,86.5 H795.5 Z" fill="#8fb1dc" stroke="#222" stroke-width="1.3" stroke-linejoin="round"/>
</g>
<path d="M796.2,44.8 H805.5 V86 H796.2 Z" fill="#e4e6ea"/>
<path d="M796.2,44.5 L810.8,30.2 H820 L805.5,44.5 Z" fill="#f5f5f7"/>
<path d="M805.5,44.5 L820,30.2 H845.3 L830.8,44.5 Z" fill="#c9ddf1"/>
<path d="M805.5,44.8 H830.8 V86 H805.5 Z" fill="url(#gBlueF)"/>
<path d="M830.8,44.5 L845.3,30.2 V71.3 L830.8,86 Z" fill="url(#gBlueR)"/>
<path d="M795.5,44.5 L810.5,29.5 H846 V71.5 L830.8,86.5 H795.5 Z M805.5,44.5 V86.5 M805.5,44.5 L820,30 M805.5,44.5 H830.8 L846,29.5 M830.8,44.5 V86.5" fill="none" stroke="#1f2f4f" stroke-width="1.2" stroke-linejoin="round"/>
<path d="M836.5,52 H843.5 V47.5 L853.5,56 L843.5,64.5 V60 H836.5 Z" fill="#333" filter="url(#dsh)"/>
<!-- assemble: new component -->
<g filter="url(#dsh)">
<path d="M918.5,63.5 V89.5 H968.5 L977.5,80.5 V55.5 H952.5 V30.5 H926.5 L918.5,39.5 Z" fill="#cfd3da" stroke="#222" stroke-width="1.3" stroke-linejoin="round"/>
</g>
<path d="M919.2,40 L927,31.2 H952 L944,40 Z" fill="#c9ddf1"/>
<rect x="919.2" y="40" width="24.8" height="23.5" fill="url(#gBlueF)"/>
<path d="M944,40 L952,31.2 V55 L944,63.5 Z" fill="url(#gBlueR)"/>
<path d="M944,63.5 L952.5,55.5 H977 L968.5,63.5 Z" fill="#f1f2f4"/>
<rect x="919.2" y="63.5" width="24.8" height="25.5" fill="#cdd1d8"/>
<rect x="944" y="63.5" width="24.5" height="25.5" fill="#d5d8de"/>
<path d="M968.5,63.5 L977,55.5 V80.5 L968.5,89 Z" fill="#9ca5b0"/>
<path d="M918.5,63.5 V89.5 H968.5 L977.5,80.5 V55.5 H952.5 V30.5 H926.5 L918.5,39.5 Z M918.5,39.5 H944 L952.5,30.5 M944,39.5 V89.5 M918.5,63.5 H968.5 L977.5,55.5 M968.5,63.5 V89.5 M944,63.5 L952.5,55.5" fill="none" stroke="#222" stroke-width="1.2" stroke-linejoin="round"/>
<path d="M925,29 H931 V36.5 H938.5 V42.5 H931 V50 H925 V42.5 H917.5 V36.5 H925 Z" fill="#fff" stroke="#444" stroke-width="1.1" filter="url(#dsh)"/>
<!-- joint -->
<g filter="url(#dsh)">
<path d="M1006.5,48.5 L1019.5,37 V70 L1006.5,81 Z" fill="#c9ced8" stroke="#333" stroke-width="1.1"/>
<path d="M1048,40 L1061.5,50.5 V83.5 L1048,73.5 Z" fill="#c9ced8" stroke="#333" stroke-width="1.1"/>
<rect x="1019.5" y="33.5" width="10.5" height="20.5" rx="5" fill="#c0c6d0" stroke="#444" stroke-width="1"/>
<rect x="1037.5" y="50" width="10.5" height="25.5" rx="5" fill="#c0c6d0" stroke="#444" stroke-width="1"/>
</g>
<ellipse cx="1024.7" cy="35" rx="4.8" ry="2.5" fill="#f0f2f5" stroke="#555" stroke-width="0.8"/><circle cx="1024.7" cy="35" r="1" fill="#333"/>
<ellipse cx="1042.7" cy="52.5" rx="4.8" ry="2.5" fill="#f0f2f5" stroke="#555" stroke-width="0.8"/>
<path d="M1024.9,55.5 V62 M1042.7,42.5 V52" stroke="#ff7a00" stroke-width="1.8"/>
<!-- construct -->
<g filter="url(#dsh)">
<path d="M1153.5,44.5 L1168.5,29.5 H1187.5 V70.5 L1172.5,86 H1153.5 Z" fill="#d0d4dc" stroke="#222" stroke-width="1.2" stroke-linejoin="round"/>
<path d="M1193,46 L1210.5,29.5 V70 L1193,86.5 Z" fill="#e58d52" stroke="#7a3a12" stroke-width="1.2" stroke-linejoin="round"/>
</g>
<path d="M1154.2,44.8 L1168.8,30.2 H1187 L1172.3,44.8 Z" fill="#f3f3f6"/>
<rect x="1154.2" y="44.8" width="18.2" height="40.5" fill="url(#gGrayF)"/>
<path d="M1172.4,44.8 L1187,30.2 V70.3 L1172.4,85.3 Z" fill="#5a9146"/>
<path d="M1174,46 L1186,34 V69.5 L1174,82" fill="none" stroke="#9bd08a" stroke-width="0.9"/>
<path d="M1153.5,44.5 L1168.5,29.5 H1187.5 V70.5 L1172.5,86 H1153.5 Z M1153.5,44.5 H1172.5 L1187.5,29.5 M1172.5,44.5 V86" fill="none" stroke="#222" stroke-width="1.2" stroke-linejoin="round"/>
<!-- inspect -->
<path d="M1327,42.5 V51.3 M1381,42.5 V51.3 M1327,46.8 H1381" stroke="#3b3b3b" stroke-width="2.4" fill="none" filter="url(#dsh)"/>
<rect x="1326.5" y="63.5" width="55" height="9" rx="1" fill="#e8c232" stroke="#7b3b12" stroke-width="1.2" filter="url(#dsh)"/>
<path d="M1331,64.5 v2 M1335,64.5 v2 M1339,64.5 v4 M1343,64.5 v2 M1347,64.5 v2 M1351,64.5 v4 M1355,64.5 v2 M1359,64.5 v2 M1363,64.5 v4 M1367,64.5 v2 M1371,64.5 v2 M1375,64.5 v4" stroke="#8a6a20" stroke-width="0.8"/>
<!-- insert -->
<g filter="url(#dsh)"><rect x="1469.5" y="29.5" width="57" height="57" fill="url(#gSky)" stroke="#2f2f2f" stroke-width="1.3"/></g>
<circle cx="1510.6" cy="43.5" r="6.5" fill="#fff8d0"/><circle cx="1510.6" cy="43.5" r="7.5" fill="none" stroke="#f0e090" stroke-width="1.2" opacity="0.7"/>
<path d="M1503,68 L1511,60 L1526,74 V86 H1500 Z" fill="#9aa2ae"/>
<path d="M1470.2,66 L1486,57 C1490,56 1493,58 1496,61 L1520,86 H1470.2 Z" fill="#6f7682"/>
<path d="M1496,61 C1492,66 1488,72 1492,78 L1500,86 H1520 Z" fill="#8e96a2"/>
<path d="M1496,61 L1520,86" stroke="#dcdcd0" stroke-width="1"/>
<rect x="1469.5" y="29.5" width="57" height="57" fill="none" stroke="#2f2f2f" stroke-width="1.3"/>
<!-- make: printer -->
<g filter="url(#dsh)"><path d="M1603,32.5 H1649 L1655.5,39 V81 C1655.5,84 1653,86.5 1650,86.5 H1602 C1599,86.5 1596.5,84 1596.5,81 V39 Z" fill="url(#gPrinter)" stroke="#3a3a3a" stroke-width="1.3"/></g>
<path d="M1598,40 H1654" stroke="#ffffff" stroke-width="1"/>
<rect x="1602.5" y="51.5" width="47.5" height="29.5" rx="3" fill="#5a5a5a" stroke="#333" stroke-width="1"/>
<path d="M1605,53 H1648 L1645,57 H1608 Z" fill="#777"/>
<path d="M1607.5,76 L1617,63 H1634.5 L1644,76 Z" fill="#f2f2f2" stroke="#333" stroke-width="0.8"/>
<path d="M1612,69.5 H1639.5 M1620,63 L1617,76 M1626,63 V76 M1632,63 L1635,76" stroke="#c8c8c8" stroke-width="0.7"/>
<path d="M1618.5,52 H1626.5 V62.5 L1622.5,66 L1618.5,62.5 Z" fill="#8fc0e0" stroke="#2a5a90" stroke-width="1"/>
<circle cx="1646.4" cy="45.6" r="2.6" fill="#1a8a1a"/>
<!-- add-ins -->
<g filter="url(#dsh)"><rect x="1735.5" y="33.5" width="45.5" height="41" fill="url(#gWin)" stroke="#333" stroke-width="1.3"/></g>
<rect x="1736.2" y="34.2" width="44" height="7.8" fill="#7b8190"/>
<path d="M1736,42.5 H1780.5" stroke="#eef" stroke-width="1"/>
<path d="M1742,51 L1747,54.5 L1742,58" fill="none" stroke="#333" stroke-width="2"/>
<path d="M1751,52.5 H1757.5" stroke="#333" stroke-width="2"/>
<g filter="url(#dsh)">
<path d="M1777.3,61 h4.6 l0.8,3.5 l3.2,1.5 l3.2,-2 l3.2,3.2 l-2,3.2 l1.4,3.2 l3.6,0.8 v4.6 l-3.6,0.8 l-1.4,3.2 l2,3.2 l-3.2,3.2 l-3.2,-2 l-3.2,1.4 l-0.8,3.6 h-4.6 l-0.8,-3.6 l-3.2,-1.4 l-3.2,2 l-3.2,-3.2 l2,-3.2 l-1.4,-3.2 l-3.6,-0.8 v-4.6 l3.6,-0.8 l1.4,-3.2 l-2,-3.2 l3.2,-3.2 l3.2,2 l3.2,-1.5 Z" fill="#94b4e2" stroke="#3b5f9a" stroke-width="1.1"/>
</g>
<circle cx="1779.6" cy="73.5" r="3.6" fill="#fff" stroke="#3b5f9a" stroke-width="0.8"/>
<!-- select -->
<rect x="1873" y="21" width="78" height="78" rx="2.5" fill="#5889b5"/>
<rect x="1884" y="30" width="39" height="26" fill="none" stroke="#55aa00" stroke-width="2.2"/>
<path d="M1922.3,55.5 V81.5 L1928.3,75.5 L1933.5,86.5 L1938.2,84.2 L1933,73.5 H1940.3 Z" fill="url(#gCur)" stroke="#0a0a0a" stroke-width="1.1" stroke-linejoin="miter" filter="url(#dsh)"/>
</g>

<rect x="4" y="140" width="599" height="50" fill="#a9a9a9" />
<rect x="6" y="142" width="595" height="46" fill="#d3d3d3" />
<path d="M13.5,165 L24,159 L24,171 Z M23,165 L33.5,159 L33.5,171 Z" fill="#3a3a3a"/>
<text x="59" y="172" font-size="23" font-weight="400" fill="#595959" stroke="#595959" stroke-width="0.45" textLength="98.6" lengthAdjust="spacingAndGlyphs" >BROWSER</text>
<circle cx="571" cy="165" r="8.5" fill="#333"/><rect x="565" y="163.5" width="12" height="3" fill="#ddd"/>
<rect x="594" y="154" width="1.5" height="22" fill="#8a8a8a" />
<rect x="597.5" y="154" width="1.5" height="22" fill="#8a8a8a" />
<rect x="76" y="200" width="376" height="40" fill="#c8c8c8" />
<rect x="80" y="204" width="322" height="32" fill="#858585" />
<defs><linearGradient id="gTri" x1="0" y1="0" x2="1" y2="1"><stop offset="0" stop-color="#9a9a9a"/><stop offset="1" stop-color="#000"/></linearGradient></defs>
<path d="M42,226 L54.5,213.5 V226 Z" fill="url(#gTri)" stroke="#000" stroke-width="1.6" stroke-linejoin="miter"/>
<text x="192.3" y="228" font-size="23" font-weight="700" fill="#ffffff" stroke="#ffffff" stroke-width="0.2" textLength="191.7" lengthAdjust="spacingAndGlyphs" >amphora vase v1</text>
<rect x="112" y="248" width="228" height="40" fill="#cbcbcb" />
<path d="M78,259.5 L90,268 L78,276.5 Z" fill="#fff" stroke="#111" stroke-width="1.6" stroke-linejoin="miter"/>
<text x="179" y="276" font-size="23" font-weight="400" fill="#3d3d3d" stroke="#3d3d3d" stroke-width="0.45" textLength="140" lengthAdjust="spacingAndGlyphs" >Named Views</text>
<rect x="112" y="296" width="196" height="40" fill="#cbcbcb" />
<text x="179" y="324" font-size="23" font-weight="400" fill="#3d3d3d" stroke="#3d3d3d" stroke-width="0.45" textLength="108" lengthAdjust="spacingAndGlyphs" >Units: mm</text>
<rect x="112" y="344" width="198" height="40" fill="#cbcbcb" />
<path d="M78,355.5 L90,364 L78,372.5 Z" fill="#fff" stroke="#111" stroke-width="1.6" stroke-linejoin="miter"/>
<text x="228.5" y="372" font-size="23" font-weight="400" fill="#3d3d3d" stroke="#3d3d3d" stroke-width="0.45" textLength="70" lengthAdjust="spacingAndGlyphs" >Origin</text>
<rect x="112" y="392" width="206" height="40" fill="#cbcbcb" />
<path d="M78,403.5 L90,412 L78,420.5 Z" fill="#fff" stroke="#111" stroke-width="1.6" stroke-linejoin="miter"/>
<text x="228.5" y="420" font-size="23" font-weight="400" fill="#3d3d3d" stroke="#3d3d3d" stroke-width="0.45" textLength="69" lengthAdjust="spacingAndGlyphs" >Bodies</text>
<rect x="112" y="440" width="238" height="40" fill="#cbcbcb" />
<path d="M78,451.5 L90,460 L78,468.5 Z" fill="#fff" stroke="#111" stroke-width="1.6" stroke-linejoin="miter"/>
<text x="228.5" y="468" font-size="23" font-weight="400" fill="#3d3d3d" stroke="#3d3d3d" stroke-width="0.45" textLength="96.8" lengthAdjust="spacingAndGlyphs" >Canvases</text>
<rect x="112" y="488" width="230" height="40" fill="#cbcbcb" />
<path d="M78,499.5 L90,508 L78,516.5 Z" fill="#fff" stroke="#111" stroke-width="1.6" stroke-linejoin="miter"/>
<text x="228.5" y="516" font-size="23" font-weight="400" fill="#3d3d3d" stroke="#3d3d3d" stroke-width="0.45" textLength="92" lengthAdjust="spacingAndGlyphs" >Sketches</text>
<rect x="112" y="536" width="270" height="40" fill="#cbcbcb" />
<path d="M78,547.5 L90,556 L78,564.5 Z" fill="#fff" stroke="#111" stroke-width="1.6" stroke-linejoin="miter"/>
<text x="228.5" y="564" font-size="23" font-weight="400" fill="#3d3d3d" stroke="#3d3d3d" stroke-width="0.45" textLength="135.8" lengthAdjust="spacingAndGlyphs" >Construction</text>

<g id="tree-icons">
<g>
<path d="M93.8,226 C93.8,222 88.8,218 88.8,213 C88.8,207.5 92.8,204 97.8,204 C102.8,204 106.8,207.5 106.8,213 C106.8,218 101.8,222 101.8,226 Z" fill="url(#gBulb)" stroke="#111" stroke-width="1.3"/>
<circle cx="94.8" cy="209.5" r="2.6" fill="#ffffff"/>
<rect x="94.0" y="226" width="7.6" height="5.5" fill="#e8e8e8" stroke="#111" stroke-width="1.1"/>
<path d="M96.8,226.5 V231" stroke="#b0b0b0" stroke-width="1.2"/>
<path d="M95.0,231.5 H100.6 L99.3,233.5 H96.3 Z" fill="#111"/>
</g>
<g filter="url(#dsh)">
<path d="M135.7,211.2 L140.9,205.4 H160.3 V224.7 L154.8,230.4 H135.7 Z" fill="#c9ced8" stroke="#111" stroke-width="1.3" stroke-linejoin="round"/>
</g>
<path d="M136.5,211.4 L141.2,206.2 H159.5 L154.6,211.4 Z" fill="#f2f3f6"/>
<rect x="136.5" y="211.6" width="18" height="18" fill="url(#gFold)"/>
<path d="M154.8,211.4 L159.6,206.2 V224.4 L154.8,229.6 Z" fill="#98a3b4"/>
<path d="M135.7,211.2 L140.9,205.4 H160.3 V224.7 L154.8,230.4 H135.7 Z" fill="none" stroke="#111" stroke-width="1.3" stroke-linejoin="round"/>
<circle cx="423.7" cy="220.4" r="15" fill="url(#gFold)" stroke="#333" stroke-width="1.2"/>
<path d="M416,218 L424,225.5 L439,208" fill="none" stroke="#3a3a3a" stroke-width="4.6" stroke-linecap="square"/>
<path d="M416,218 L424,225.5 L439,208" fill="none" stroke="#7fbf5f" stroke-width="2.6" stroke-linecap="square"/>
<g filter="url(#dsh)">
<path d="M119.3,254.10000000000002 H132.0 L133.7,256.3 H148.5 V279.6 H119.3 Z" fill="url(#gFold)" stroke="#1e1e1e" stroke-width="1.1" stroke-linejoin="round"/>
</g>
<path d="M120.3,255.10000000000002 H131.6 L132.8,256.8 H120.3 Z" fill="#a9b0c0"/>
<path d="M119.89999999999999,257.3 H147.9" stroke="#1e1e1e" stroke-width="0.9"/>
<g filter="url(#dsh)">
<path d="M122.3,300.3 H137 L144.7,308 V324.5 H122.3 Z" fill="url(#gFold)" stroke="#1e1e1e" stroke-width="1.1"/>
<rect x="119.5" y="323.8" width="28" height="5.8" rx="1" fill="#f2c21f" stroke="#a05e0e" stroke-width="1"/>
</g>
<path d="M137,300.3 V308 H144.7" fill="#eef0f4" stroke="#1e1e1e" stroke-width="0.9"/>
<path d="M122,324.8 v1.6 M125,324.8 v1.6 M128,324.8 v1.6 M131,324.8 v1.6 M134,324.8 v1.6 M137,324.8 v1.6 M140,324.8 v1.6 M143,324.8 v1.6" stroke="#9a6a10" stroke-width="0.8"/>
<g>
<path d="M129.7,370.7 C129.7,366.7 124.69999999999999,362.7 124.69999999999999,357.7 C124.69999999999999,352.2 128.7,348.7 133.7,348.7 C138.7,348.7 142.7,352.2 142.7,357.7 C142.7,362.7 137.7,366.7 137.7,370.7 Z" fill="url(#gBulb)" stroke="#111" stroke-width="1.3"/>
<circle cx="130.7" cy="354.2" r="2.6" fill="#ffffff"/>
<rect x="129.89999999999998" y="370.7" width="7.6" height="5.5" fill="#e8e8e8" stroke="#111" stroke-width="1.1"/>
<path d="M132.7,371.2 V375.7" stroke="#b0b0b0" stroke-width="1.2"/>
<path d="M130.89999999999998,376.2 H136.5 L135.2,378.2 H132.2 Z" fill="#111"/>
</g><g filter="url(#dsh)">
<path d="M169.2,350.2 H181.89999999999998 L183.6,352.4 H198.39999999999998 V375.7 H169.2 Z" fill="url(#gFold)" stroke="#1e1e1e" stroke-width="1.1" stroke-linejoin="round"/>
</g>
<path d="M170.2,351.2 H181.5 L182.7,352.9 H170.2 Z" fill="#a9b0c0"/>
<path d="M169.79999999999998,353.4 H197.79999999999998" stroke="#1e1e1e" stroke-width="0.9"/>
<g>
<path d="M129.7,418.7 C129.7,414.7 124.69999999999999,410.7 124.69999999999999,405.7 C124.69999999999999,400.2 128.7,396.7 133.7,396.7 C138.7,396.7 142.7,400.2 142.7,405.7 C142.7,410.7 137.7,414.7 137.7,418.7 Z" fill="url(#gBulb)" stroke="#111" stroke-width="1.3"/>
<circle cx="130.7" cy="402.2" r="2.6" fill="#ffffff"/>
<rect x="129.89999999999998" y="418.7" width="7.6" height="5.5" fill="#e8e8e8" stroke="#111" stroke-width="1.1"/>
<path d="M132.7,419.2 V423.7" stroke="#b0b0b0" stroke-width="1.2"/>
<path d="M130.89999999999998,424.2 H136.5 L135.2,426.2 H132.2 Z" fill="#111"/>
</g><g filter="url(#dsh)">
<path d="M169.2,398.2 H181.89999999999998 L183.6,400.4 H198.39999999999998 V423.7 H169.2 Z" fill="url(#gFold)" stroke="#1e1e1e" stroke-width="1.1" stroke-linejoin="round"/>
</g>
<path d="M170.2,399.2 H181.5 L182.7,400.9 H170.2 Z" fill="#a9b0c0"/>
<path d="M169.79999999999998,401.4 H197.79999999999998" stroke="#1e1e1e" stroke-width="0.9"/>
<g>
<path d="M129.7,466.7 C129.7,462.7 124.69999999999999,458.7 124.69999999999999,453.7 C124.69999999999999,448.2 128.7,444.7 133.7,444.7 C138.7,444.7 142.7,448.2 142.7,453.7 C142.7,458.7 137.7,462.7 137.7,466.7 Z" fill="url(#gBulbB)" stroke="#111" stroke-width="1.3"/>
<circle cx="130.7" cy="450.2" r="2.6" fill="#ffffff"/>
<rect x="129.89999999999998" y="466.7" width="7.6" height="5.5" fill="#e8e8e8" stroke="#111" stroke-width="1.1"/>
<path d="M132.7,467.2 V471.7" stroke="#b0b0b0" stroke-width="1.2"/>
<path d="M130.89999999999998,472.2 H136.5 L135.2,474.2 H132.2 Z" fill="#111"/>
</g><g filter="url(#dsh)">
<path d="M169.2,446.2 H181.89999999999998 L183.6,448.4 H198.39999999999998 V471.7 H169.2 Z" fill="url(#gFold)" stroke="#1e1e1e" stroke-width="1.1" stroke-linejoin="round"/>
</g>
<path d="M170.2,447.2 H181.5 L182.7,448.9 H170.2 Z" fill="#a9b0c0"/>
<path d="M169.79999999999998,449.4 H197.79999999999998" stroke="#1e1e1e" stroke-width="0.9"/>
<g>
<path d="M129.7,514.7 C129.7,510.7 124.69999999999999,506.7 124.69999999999999,501.7 C124.69999999999999,496.2 128.7,492.7 133.7,492.7 C138.7,492.7 142.7,496.2 142.7,501.7 C142.7,506.7 137.7,510.7 137.7,514.7 Z" fill="url(#gBulb)" stroke="#111" stroke-width="1.3"/>
<circle cx="130.7" cy="498.2" r="2.6" fill="#ffffff"/>
<rect x="129.89999999999998" y="514.7" width="7.6" height="5.5" fill="#e8e8e8" stroke="#111" stroke-width="1.1"/>
<path d="M132.7,515.2 V519.7" stroke="#b0b0b0" stroke-width="1.2"/>
<path d="M130.89999999999998,520.2 H136.5 L135.2,522.2 H132.2 Z" fill="#111"/>
</g><g filter="url(#dsh)">
<path d="M169.2,494.2 H181.89999999999998 L183.6,496.4 H198.39999999999998 V519.6999999999999 H169.2 Z" fill="url(#gFold)" stroke="#1e1e1e" stroke-width="1.1" stroke-linejoin="round"/>
</g>
<path d="M170.2,495.2 H181.5 L182.7,496.9 H170.2 Z" fill="#a9b0c0"/>
<path d="M169.79999999999998,497.4 H197.79999999999998" stroke="#1e1e1e" stroke-width="0.9"/>
<g>
<path d="M129.7,562.7 C129.7,558.7 124.69999999999999,554.7 124.69999999999999,549.7 C124.69999999999999,544.2 128.7,540.7 133.7,540.7 C138.7,540.7 142.7,544.2 142.7,549.7 C142.7,554.7 137.7,558.7 137.7,562.7 Z" fill="url(#gBulb)" stroke="#111" stroke-width="1.3"/>
<circle cx="130.7" cy="546.2" r="2.6" fill="#ffffff"/>
<rect x="129.89999999999998" y="562.7" width="7.6" height="5.5" fill="#e8e8e8" stroke="#111" stroke-width="1.1"/>
<path d="M132.7,563.2 V567.7" stroke="#b0b0b0" stroke-width="1.2"/>
<path d="M130.89999999999998,568.2 H136.5 L135.2,570.2 H132.2 Z" fill="#111"/>
</g><g filter="url(#dsh)">
<path d="M169.2,542.1999999999999 H181.89999999999998 L183.6,544.4 H198.39999999999998 V567.6999999999999 H169.2 Z" fill="url(#gFold)" stroke="#1e1e1e" stroke-width="1.1" stroke-linejoin="round"/>
</g>
<path d="M170.2,543.1999999999999 H181.5 L182.7,544.9 H170.2 Z" fill="#a9b0c0"/>
<path d="M169.79999999999998,545.4 H197.79999999999998" stroke="#1e1e1e" stroke-width="0.9"/>
</g>


<g id="viewcube">
<defs>
<linearGradient id="gVL" x1="0" y1="0" x2="0" y2="1"><stop offset="0" stop-color="#ebebeb"/><stop offset="1" stop-color="#d9d9d9"/></linearGradient>
<linearGradient id="gVR" x1="0" y1="0" x2="0" y2="1"><stop offset="0" stop-color="#e4e4e4"/><stop offset="1" stop-color="#d3d3d3"/></linearGradient>
</defs>
<ellipse cx="1953" cy="298" rx="72" ry="30" fill="#8c8c8c" opacity="0.55" filter="url(#blur10)"/>
<ellipse cx="1953" cy="300" rx="40" ry="16" fill="#8c8c8c" opacity="0.5" filter="url(#blur6)"/>
<path d="M1880.6,190.3 L1951.5,231 L1951.5,313.2 L1888.8,269.3 Z" fill="url(#gVL)"/>
<path d="M2022.9,190.3 L1951.5,231 L1951.5,313.2 L2015.4,269.3 Z" fill="url(#gVR)"/>
<path d="M1951.8,159 L2022.9,190.3 L1951.5,231 L1880.6,190.3 Z" fill="#ececec"/>
<path d="M1951.8,159 L2022.9,190.3 L2015.4,269.3 L1951.5,313.2 L1888.8,269.3 L1880.6,190.3 Z M1880.6,190.3 L1951.5,231 L2022.9,190.3 M1951.5,231 V313.2" fill="none" stroke="#8f8f8f" stroke-width="1.8" stroke-linejoin="round"/>
<text transform="matrix(0.86,0.5,0,1,1894,244)" font-size="15.5" fill="#9097a0" font-weight="700" textLength="52" lengthAdjust="spacingAndGlyphs">FRONT</text>
<text transform="matrix(0.86,-0.5,0,1,1963,275)" font-size="15.5" fill="#9097a0" font-weight="700" textLength="50" lengthAdjust="spacingAndGlyphs">RIGHT</text>
<text transform="matrix(0.9,0.42,-0.75,0.55,1936,187)" font-size="14" fill="#9aa0a8" font-weight="700" textLength="36" lengthAdjust="spacingAndGlyphs">TOP</text>
</g>

<rect x="2060" y="0" width="8" height="1546" fill="#9c9c9a" />
<rect x="2060" y="0" width="1.5" height="1590" fill="#8a8a8a" />
<rect x="2061.5" y="1546" width="6.5" height="50" fill="#c2c2c2" />
<path d="M2061,126 L2068,121.5" stroke="#2a9a2a" stroke-width="1.2"/>
<rect x="4" y="1430" width="599" height="50" fill="#a9a9a9" />
<rect x="6" y="1432" width="595" height="46" fill="#d3d3d3" />
<text x="58.4" y="1462" font-size="23" font-weight="400" fill="#595959" stroke="#595959" stroke-width="0.45" textLength="123" lengthAdjust="spacingAndGlyphs" >COMMENTS</text>
<circle cx="571" cy="1455" r="8.5" fill="#333"/><rect x="565" y="1453.5" width="12" height="3" fill="#ddd"/><rect x="569.5" y="1449" width="3" height="12" fill="#ddd"/>
<rect x="594" y="1444" width="1.5" height="22" fill="#8a8a8a" />
<rect x="597.5" y="1444" width="1.5" height="22" fill="#8a8a8a" />
<rect x="782" y="1432" width="289" height="48" fill="#c8c8c8" />
<rect x="1085" y="1432" width="187" height="48" fill="#c8c8c8" />

<g id="nav-icons">
<!-- orbit -->
<ellipse cx="804.4" cy="1456.5" rx="14.5" ry="4.8" fill="none" stroke="#3d3d3d" stroke-width="1.6"/>
<path d="M801.6,1469.2 V1446 H798.1 L804.4,1440 L810.7,1446 H807.2 V1469.2 Z" fill="#f2f3f6" stroke="#3a3a3a" stroke-width="1.1"/>
<path d="M795,1461.5 L799.5,1457.5 V1465 Z" fill="#3d3d3d"/>
<path d="M830.4,1450 H847.2 L838.8,1461.5 Z" fill="#333"/>
<!-- look at -->
<path d="M858,1450 L864,1442.5 V1450 M866,1450 L876,1444 V1450" fill="#d8dce4" stroke="#444" stroke-width="1"/>
<rect x="856.3" y="1450.2" width="27.4" height="18.3" fill="#e8e9ec" stroke="#3a3a3a" stroke-width="1.1"/>
<rect x="860.5" y="1454.4" width="19" height="9.9" fill="url(#gSk)" stroke="#3a3a3a" stroke-width="1"/>
<!-- hand -->
<path d="M915,1469 C911,1465 906,1459 907,1456 C908,1454 911,1455 913,1458 L914,1459 V1445 C914,1442.5 917,1442.5 917,1445 V1454 V1441.5 C917,1439 920.5,1439 920.5,1441.5 V1454 V1442 C920.5,1439.5 924,1439.5 924,1442 V1454 V1444.5 C924,1442 927.5,1442 927.5,1444.5 V1457 L929.5,1451 C930.5,1448.5 933.5,1449.5 933,1452 L929.5,1463 C928.5,1467 926,1469.5 924,1469.5 Z" fill="#f2f2f4" stroke="#3a3a3a" stroke-width="1.1" stroke-linejoin="round"/>
<!-- zoom -->
<path d="M977,1458 L987,1467" stroke="#2a2a2a" stroke-width="4" stroke-linecap="round"/>
<circle cx="969.9" cy="1450.9" r="10.3" fill="#e4f2f0" stroke="#333" stroke-width="1.6"/>
<path d="M982,1445.5 H989 M985.5,1442 V1449 M982,1450.5 H989" stroke="#333" stroke-width="1.2"/>
<!-- zoom window -->
<rect x="1011.5" y="1441.3" width="29" height="28.5" fill="none" stroke="#555" stroke-width="1" stroke-dasharray="3,2"/>
<path d="M1029,1459 L1039,1468" stroke="#2a2a2a" stroke-width="4" stroke-linecap="round"/>
<circle cx="1021.8" cy="1451.6" r="10.3" fill="#e4f2f0" stroke="#333" stroke-width="1.6"/>
<path d="M1052.7,1450 H1069.5 L1061.1,1461.5 Z" fill="#333"/>
<!-- display -->
<rect x="1093.5" y="1440" width="29.5" height="23" rx="1.5" fill="#f1f1f3" stroke="#3a3a3a" stroke-width="1.1"/>
<rect x="1096.5" y="1443" width="23.5" height="17" fill="#9ab8e0" stroke="#45556e" stroke-width="1"/>
<path d="M1104,1463 V1467 M1112,1463 V1467" stroke="#555" stroke-width="1.5"/>
<rect x="1101" y="1467" width="14" height="3" rx="1" fill="#e6e6e6" stroke="#555" stroke-width="0.8"/>
<path d="M1128,1450 H1145.5 L1136.8,1461.5 Z" fill="#333"/>
<!-- grid -->
<rect x="1155" y="1440.5" width="29" height="29.5" fill="#f0f0f2" stroke="#3a3a3a" stroke-width="1"/>
<path d="M1159,1441 V1470 M1163,1441 V1470 M1167,1441 V1470 M1171,1441 V1470 M1175,1441 V1470 M1179,1441 V1470 M1155,1444.5 H1184 M1155,1448.5 H1184 M1155,1452.5 H1184 M1155,1456.5 H1184 M1155,1460.5 H1184 M1155,1464.5 H1184" stroke="#7a7a80" stroke-width="0.9"/>
<path d="M1190,1450 H1207.5 L1198.8,1461.5 Z" fill="#333"/>
<!-- viewports -->
<rect x="1216.5" y="1443" width="29.5" height="25" fill="#34465e"/>
<rect x="1218" y="1444.5" width="12.5" height="10" fill="#9ebbe2"/><rect x="1232" y="1444.5" width="12.5" height="10" fill="#9ebbe2"/>
<rect x="1218" y="1456.5" width="12.5" height="10" fill="#9ebbe2"/><rect x="1232" y="1456.5" width="12.5" height="10" fill="#9ebbe2"/>
<path d="M1252,1450 H1269.7 L1260.9,1461.5 Z" fill="#333"/>
</g>

<path d="M0,1488 H2060 V1581 Q2060,1588 2053,1588 H0 Z" fill="#cdcdcd"/>
<g id="timeline">

<rect x="17.6" y="1516" width="4.2" height="28" fill="#555"/><path d="M23,1530 L41.9,1516 V1544 Z" fill="#555"/>
<path d="M66,1530 L85,1516 V1544 Z" fill="#555"/><rect x="87.5" y="1524" width="4.4" height="12" fill="#555"/>
<rect x="115.8" y="1524" width="4.4" height="12" fill="#555"/><path d="M122.5,1516 L141.7,1530 L122.5,1544 Z" fill="#555"/>
<path d="M167.8,1514 L191.8,1530 L167.8,1545.7 Z" fill="#555"/>
<path d="M216,1516 L236,1530 L216,1544 Z" fill="#555"/><rect x="238" y="1516" width="4.2" height="28" fill="#555"/>
<g>
<rect x="289" y="1517" width="30" height="30" fill="url(#gSky)" stroke="#444" stroke-width="1.5"/>
<rect x="309" y="1522" width="5" height="5" fill="#fff6c0"/>
<path d="M290,1537 L299,1530 L314,1546 H290 Z" fill="#6e7480"/>
<path d="M305,1536 L309,1533 L318,1540 V1546 H314 Z" fill="#9aa0aa"/>
</g>
<g>
<rect x="337" y="1517" width="30" height="30" fill="url(#gSk)" stroke="#000" stroke-width="2.2"/>
<path d="M343,1521 V1542 H361" fill="none" stroke="#111" stroke-width="1.8"/>
<rect x="339" y="1538" width="6" height="6" fill="#5aa0e0" opacity="0.8"/>
<path d="M345,1540 L363,1522" stroke="#e8a060" stroke-width="5"/>
<path d="M351,1534 L364,1521" stroke="#f5d800" stroke-width="5"/>
<path d="M344,1541 L347,1538" stroke="#222" stroke-width="2.5"/>
</g>
<g>
<path d="M388,1530 C394,1517 408,1517 412,1524" fill="none" stroke="#555" stroke-width="1.6"/>
<path d="M385,1528 L390,1526 L389,1532 Z" fill="#555"/>
<path d="M385,1537 L390,1531 H411 L415,1537 V1542 L409,1548 H391 L385,1542 Z" fill="#a9c3e6" stroke="#3a5a8a" stroke-width="1.5"/>
<path d="M390,1531 L392,1537 H409 L411,1531" fill="#c8daf0" stroke="#6a88b0" stroke-width="1"/>
<path d="M409,1537 L415,1537 V1542 L409,1548 Z" fill="#ffffff" opacity="0.8"/>
</g>
<g>
<rect x="433" y="1517" width="30" height="30" fill="url(#gSk)" stroke="#000" stroke-width="2.2"/>
<path d="M439,1521 V1542 H457" fill="none" stroke="#111" stroke-width="1.8"/>
<rect x="435" y="1538" width="6" height="6" fill="#5aa0e0" opacity="0.8"/>
<path d="M441,1540 L459,1522" stroke="#e8a060" stroke-width="5"/>
<path d="M447,1534 L460,1521" stroke="#f5d800" stroke-width="5"/>
<path d="M440,1541 L443,1538" stroke="#222" stroke-width="2.5"/>
</g>
<g>
<path d="M487,1547 V1528 L502,1518 V1537 Z" fill="#e8975e" stroke="#7a3a12" stroke-width="1.8"/>
<path d="M489,1530 L500,1523" stroke="#f5b98a" stroke-width="2"/>
<path d="M483,1546 V1531 L487,1528 M507,1517 V1534 L502,1537" fill="none" stroke="#333" stroke-width="1.2"/>
<rect x="481" y="1541" width="6" height="6" fill="#4d9af5"/>
<rect x="504" y="1516" width="6" height="6" fill="#4d9af5"/>
<rect x="492" y="1529" width="6" height="6" fill="#4d9af5"/>
</g>
<g>
<path d="M535,1547 V1528 L550,1518 V1537 Z" fill="#e8975e" stroke="#7a3a12" stroke-width="1.8"/>
<path d="M537,1530 L548,1523" stroke="#f5b98a" stroke-width="2"/>
<path d="M531,1546 V1531 L535,1528 M555,1517 V1534 L550,1537" fill="none" stroke="#333" stroke-width="1.2"/>
<rect x="529" y="1541" width="6" height="6" fill="#4d9af5"/>
<rect x="552" y="1516" width="6" height="6" fill="#4d9af5"/>
<rect x="540" y="1529" width="6" height="6" fill="#4d9af5"/>
</g>
<g>
<rect x="577" y="1517" width="30" height="30" fill="url(#gSk)" stroke="#000" stroke-width="2.2"/>
<path d="M583,1521 V1542 H601" fill="none" stroke="#111" stroke-width="1.8"/>
<rect x="579" y="1538" width="6" height="6" fill="#5aa0e0" opacity="0.8"/>
<path d="M585,1540 L603,1522" stroke="#e8a060" stroke-width="5"/>
<path d="M591,1534 L604,1521" stroke="#f5d800" stroke-width="5"/>
<path d="M584,1541 L587,1538" stroke="#222" stroke-width="2.5"/>
</g>
<g>
<rect x="625" y="1517" width="30" height="30" fill="url(#gSk)" stroke="#000" stroke-width="2.2"/>
<path d="M631,1521 V1542 H649" fill="none" stroke="#111" stroke-width="1.8"/>
<rect x="627" y="1538" width="6" height="6" fill="#5aa0e0" opacity="0.8"/>
<path d="M633,1540 L651,1522" stroke="#e8a060" stroke-width="5"/>
<path d="M639,1534 L652,1521" stroke="#f5d800" stroke-width="5"/>
<path d="M632,1541 L635,1538" stroke="#222" stroke-width="2.5"/>
</g>
<g>
<path d="M673,1517 H704 V1538 L694,1546 H683 L673,1538 Z" fill="#b8d0ec" stroke="#3a5a8a" stroke-width="1.5"/>
<path d="M673,1538 L683,1546 H694 L704,1538 V1517 L694,1540 H683 L673,1517 Z" fill="#90aed6"/>
<path d="M677,1518 L684,1538 M700,1518 L693,1538" stroke="#eef4fb" stroke-width="1.2"/>
<circle cx="688.5" cy="1541" r="6.5" fill="#e6e8ec" stroke="#666" stroke-width="1.1"/>
</g>
<g>
<path d="M727,1547 V1528 L742,1518 V1537 Z" fill="#e8975e" stroke="#7a3a12" stroke-width="1.8"/>
<path d="M729,1530 L740,1523" stroke="#f5b98a" stroke-width="2"/>
<path d="M723,1546 V1531 L727,1528 M747,1517 V1534 L742,1537" fill="none" stroke="#333" stroke-width="1.2"/>
<rect x="721" y="1541" width="6" height="6" fill="#4d9af5"/>
<rect x="744" y="1516" width="6" height="6" fill="#4d9af5"/>
<rect x="732" y="1529" width="6" height="6" fill="#4d9af5"/>
</g>
<g>
<rect x="769" y="1517" width="30" height="30" fill="url(#gSk)" stroke="#000" stroke-width="2.2"/>
<path d="M775,1521 V1542 H793" fill="none" stroke="#111" stroke-width="1.8"/>
<rect x="771" y="1538" width="6" height="6" fill="#5aa0e0" opacity="0.8"/>
<path d="M777,1540 L795,1522" stroke="#e8a060" stroke-width="5"/>
<path d="M783,1534 L796,1521" stroke="#f5d800" stroke-width="5"/>
<path d="M776,1541 L779,1538" stroke="#222" stroke-width="2.5"/>
</g>
<g>
<path d="M840,1521 H826 C820,1521 818,1526 818,1528 C818,1532 821,1534 826,1534 H838 C843,1534 845,1537 845,1540" fill="none" stroke="#3a5a8a" stroke-width="8.5" stroke-linecap="round"/>
<path d="M840,1521 H826 C820,1521 818,1526 818,1528 C818,1532 821,1534 826,1534 H838 C843,1534 845,1537 845,1540" fill="none" stroke="#a8c6ea" stroke-width="5.5" stroke-linecap="round"/>
<rect x="827" y="1538" width="10" height="9.5" fill="#eeeeee" stroke="#333" stroke-width="1.8"/>
</g>
<g>
<path d="M866,1524 C866,1518 874,1518 876,1524 V1546 C874,1548 868,1548 866,1544 Z" fill="#e8eaee" stroke="#444" stroke-width="1.3"/>
<path d="M870,1526 L876,1521 M870,1526 V1546" stroke="#777" stroke-width="1" fill="none"/>
<path d="M894,1524 C894,1518 886,1518 884,1524 V1546 C886,1548 892,1548 894,1544 Z" fill="#a8c3e8" stroke="#3a5a8a" stroke-width="1.3"/>
<path d="M880,1516 V1548" stroke="#333" stroke-width="1.5"/>
<path d="M877,1534 H883" stroke="#333" stroke-width="1"/>
</g>
<path d="M305.5,1556 V1566 H880.5 V1556" fill="none" stroke="#6a6a6a" stroke-width="3"/>
<rect x="352.5" y="1556" width="3" height="9" fill="#6a6a6a"/><rect x="400.5" y="1556" width="3" height="9" fill="#6a6a6a"/><rect x="448.5" y="1556" width="3" height="9" fill="#6a6a6a"/><rect x="496.5" y="1556" width="3" height="9" fill="#6a6a6a"/><rect x="544.5" y="1556" width="3" height="9" fill="#6a6a6a"/><rect x="592.5" y="1556" width="3" height="9" fill="#6a6a6a"/><rect x="640.5" y="1556" width="3" height="9" fill="#6a6a6a"/><rect x="688.5" y="1556" width="3" height="9" fill="#6a6a6a"/><rect x="736.5" y="1556" width="3" height="9" fill="#6a6a6a"/><rect x="784.5" y="1556" width="3" height="9" fill="#6a6a6a"/><rect x="832.5" y="1556" width="3" height="9" fill="#6a6a6a"/>
<path d="M892,1504 H916 V1512.4 L905.5,1521 H902 L892,1512.4 Z" fill="#6a6a6a"/><rect x="902" y="1520" width="3.5" height="47.5" fill="#6a6a6a"/>
<path d="M2051.6,1524.1 L2051.6,1531.1 L2046.8,1531.7 L2046.5,1532.3 L2049.5,1536.2 L2044.6,1541.1 L2040.7,1538.1 L2040.1,1538.4 L2039.5,1543.2 L2032.5,1543.2 L2031.9,1538.4 L2031.3,1538.1 L2027.4,1541.1 L2022.5,1536.2 L2025.5,1532.3 L2025.2,1531.7 L2020.4,1531.1 L2020.4,1524.1 L2025.2,1523.5 L2025.5,1522.9 L2022.5,1519.0 L2027.4,1514.1 L2031.3,1517.1 L2031.9,1516.8 L2032.5,1512.0 L2039.5,1512.0 L2040.1,1516.8 L2040.7,1517.1 L2044.6,1514.1 L2049.5,1519.0 L2046.5,1522.9 L2046.8,1523.5 Z M2043,1527.6 A7,7 0 1 0 2029,1527.6 A7,7 0 1 0 2043,1527.6 Z" fill="#656565" fill-rule="evenodd"/><circle cx="2036" cy="1527.6" r="4.3" fill="#656565"/>
</g>

<defs><linearGradient id="gBot" x1="0" y1="0" x2="1" y2="0"><stop offset="0" stop-color="#8a8a8a"/><stop offset="0.7" stop-color="#8e8e8e"/><stop offset="1" stop-color="#b0b0b0"/></linearGradient></defs>
<rect x="0" y="1588.5" width="2068" height="8" fill="url(#gBot)" />
<path d="M0,1587 H2053 Q2060,1587 2060,1580" fill="none" stroke="#5e5e5e" stroke-width="1.8"/>
<rect x="195" y="1588" width="2" height="2" fill="#111" />
</svg></body></html>
